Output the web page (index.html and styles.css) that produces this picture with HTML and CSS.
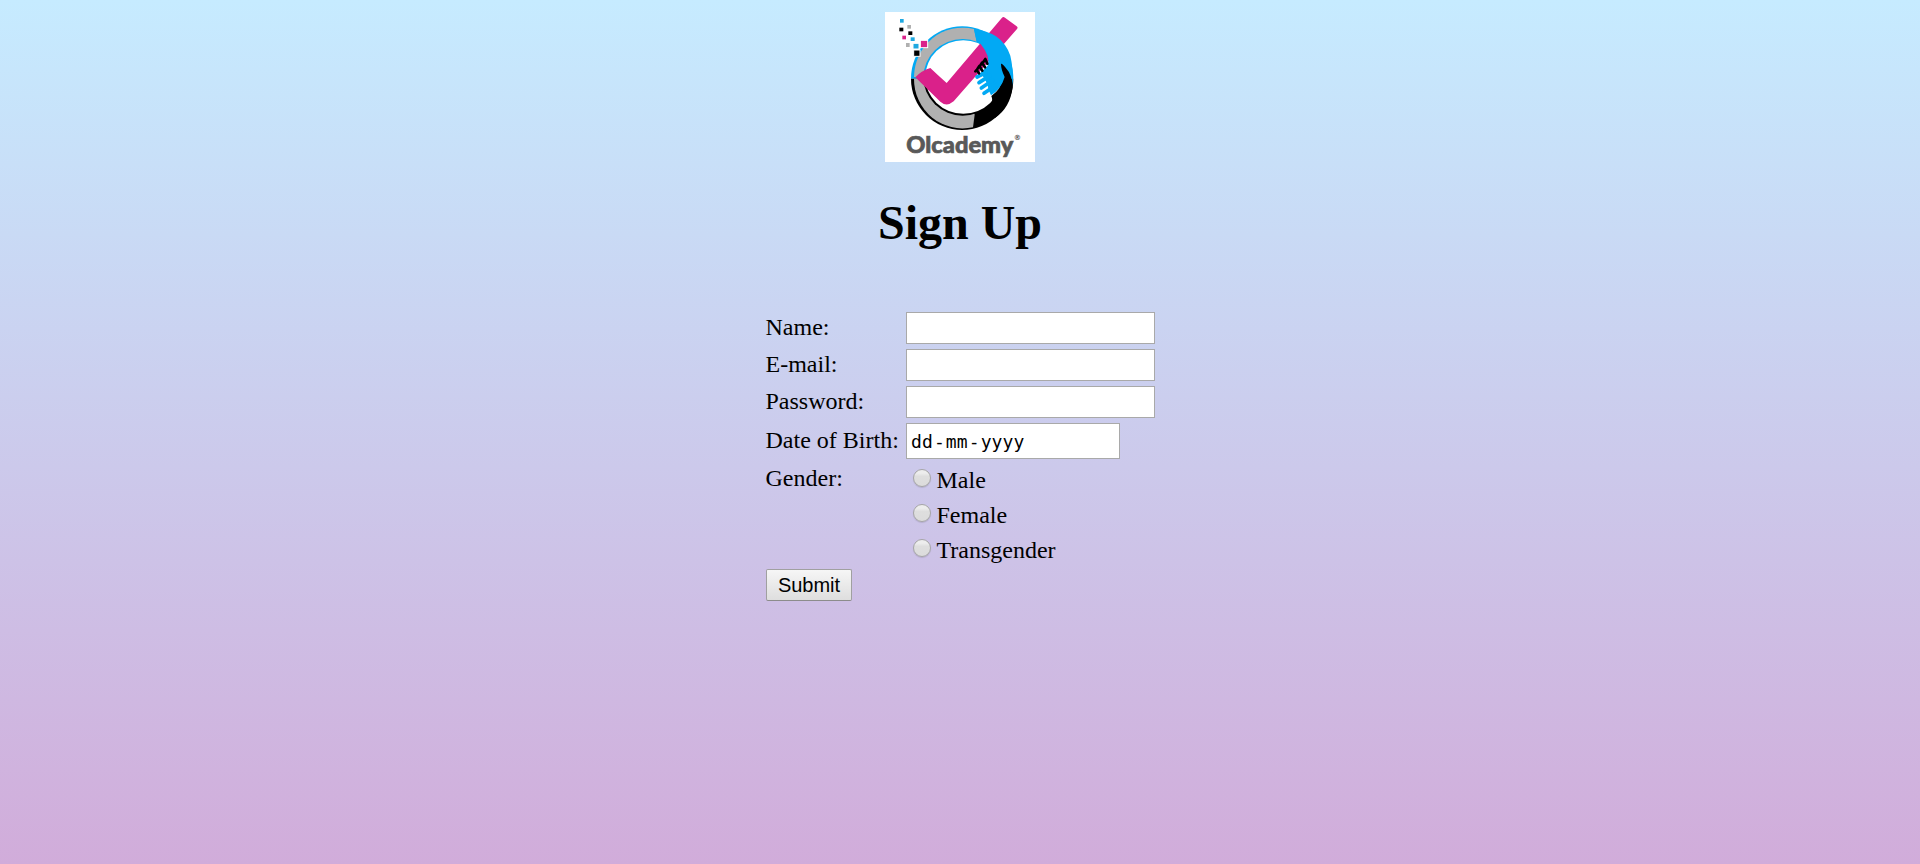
FILE: index.html
```html
<!DOCTYPE html>
<html lang="en">
<head>
<meta charset="utf-8">
<title>Sign Up</title>
<link rel="stylesheet" href="styles.css">
</head>
<body>
<main class="page">
  <svg class="logo" viewBox="15 12 450 450" role="img" aria-label="Olcademy">
    <rect x="15" y="12" width="450" height="450" fill="#fff"/>
    <!-- ring: blue upper half, black lower half -->
    <path d="M93 212A153.500 157 0 0 1 400 212Z" fill="#02a9f4"/>
    <path d="M93 212A153.500 154 0 0 0 400 212Z" fill="#000"/>
    <path d="M102 207A146 149 0 0 1 282 63L290 101L248 207Z" fill="#b0b0b0"/>
    <path d="M102 212A146 148 0 0 0 279 358L284 320L248 212Z" fill="#b0b0b0"/>
    <path d="M130 209A118 116 0 0 1 366 209Z" fill="#02a9f4"/>
    <path d="M130 207A118 116 0 0 0 366 207Z" fill="#000"/>
    <ellipse cx="250" cy="207" rx="114" ry="110" fill="#fff"/>
    <!-- check mark -->
    <path d="M106 208Q124 188 151 180Q174 202 200 225L366 29Q370 25 375 29L410 55Q415 59 411 63L221 280Q200 298 181 281Z" fill="#da218a"/>
    <!-- arm and hand crossing the check -->
    <path d="M282 64Q318 67 348 85Q378 106 391 143Q400 180 399 235Q398 200 365 166L378 207Q362 244 333 262L326 246L322 228L312 210L302 194L323 173Q332 145 302 108L290 101Z" fill="#02a9f4"/>
    <path d="M291 207L318 193M297 224L330 203M304 240L338 217M312 256L350 230" fill="none" stroke="#02a9f4" stroke-width="11" stroke-linecap="round"/>
    <path d="M363 167Q367 166 377 179Q397 200 398 238Q390 300 345 330L310 313Q345 290 334 264Q363 244 374 207Q363 184 363 167Z" fill="#000"/>
    <path d="M286 190L290 186L297 196M292 183L298 174L307 188M300 173L306 164L315 178M310 162L316 153L322 167" fill="none" stroke="#000" stroke-width="8" stroke-linecap="round" stroke-linejoin="round"/>
    <!-- scattered squares -->
    <g>
      <rect x="60" y="33" width="11" height="11" fill="#1fa9e1"/>
      <rect x="82" y="51" width="11" height="11" fill="#b0b0b0"/>
      <rect x="58" y="59" width="12" height="11" fill="#000"/>
      <rect x="85" y="70" width="12" height="11" fill="#000"/>
      <rect x="67" y="83" width="11" height="11" fill="#da218a"/>
      <rect x="92" y="88" width="12" height="11" fill="#1fa9e1"/>
      <rect x="78" y="105" width="11" height="12" fill="#b0b0b0"/>
      <rect x="99" y="106" width="18" height="17" fill="#1fa9e1" stroke="#fff" stroke-width="3"/>
      <rect x="121" y="97" width="22" height="22" fill="#da218a" stroke="#fff" stroke-width="3"/>
      <rect x="101" y="126" width="19" height="19" fill="#000" stroke="#fff" stroke-width="3"/>
    </g>
    <text class="brand" x="79" y="434" textLength="321" lengthAdjust="spacingAndGlyphs">Olcademy</text>
    <text class="mark" x="401" y="396">®</text>
  </svg>

  <h1 class="title">Sign Up</h1>

  <form class="form">
    <label class="label" for="name">Name:</label>
    <input class="field" id="name" type="text">
    <label class="label" for="email">E-mail:</label>
    <input class="field" id="email" type="email">
    <label class="label" for="password">Password:</label>
    <input class="field" id="password" type="password">
    <label class="label label-date">Date of Birth:</label>
    <div class="date" tabindex="0"><span>dd</span><span>-</span><span>mm</span><span>-</span><span>yyyy</span></div>
    <span class="label label-gender">Gender:</span>
    <div class="options">
      <label class="option"><input class="radio" type="radio" name="gender">Male</label>
      <label class="option"><input class="radio" type="radio" name="gender">Female</label>
      <label class="option"><input class="radio" type="radio" name="gender">Transgender</label>
    </div>
    <button class="submit" type="button">Submit</button>
  </form>
</main>
</body>
</html>
```
FILE: styles.css
```css
* {
  box-sizing: border-box;
}

body {
  margin: 0;
  font: 24px/27px "Liberation Serif", "Times New Roman", serif;
  color: #000;
}

.page {
  display: flex;
  flex-direction: column;
  align-items: center;
  min-height: 864px;
  padding-top: 12px;
  background: linear-gradient(#c6ebff, #d1acda);
}

.logo {
  display: block;
  width: 150px;
  height: 150px;
}

.brand {
  font: 900 66px Lato, sans-serif;
  fill: #595959;
  stroke: #595959;
  stroke-width: 2px;
}

.mark {
  font: 700 22px "DejaVu Sans", sans-serif;
  fill: #595959;
}

.title {
  margin: 33px 0 0;
  font-size: 48px;
  line-height: 55px;
}

.form {
  display: grid;
  grid-template-columns: 141px 249px;
  row-gap: 5px;
  margin-top: 62px;
  align-items: start;
}

.label {
  padding: 2px 0 0 0.5px;
}

.label-date {
  padding-top: 4px;
}

.label-gender {
  padding-top: 1px;
}

.field {
  width: 249px;
  height: 32px;
  margin: 0;
  padding: 2px 4px;
  border: 1px solid #a9a9a9;
  background: #fff;
  font: 20px "Liberation Sans", Arial, sans-serif;
}

.date {
  display: flex;
  gap: 1px;
  width: 214px;
  height: 36px;
  padding: 4px 4px 0;
  border: 1px solid #a9a9a9;
  background: #fff;
  font: 18px/27px "DejaVu Sans Mono", monospace;
  letter-spacing: 0.1px;
}

.options {
  display: flex;
  flex-direction: column;
  gap: 8px;
  padding: 3px 0 0 7px;
}

.option {
  display: flex;
  align-items: flex-start;
  gap: 5.5px;
}

.radio {
  appearance: none;
  width: 18px;
  height: 18px;
  margin: 2px 0 0;
  border: 1px solid #a6a6a6;
  border-radius: 50%;
  background: linear-gradient(#ededed 20%, #dedede 40%, #dcdcdc);
  box-shadow: 0 1px 1px rgba(0, 0, 0, 0.12);
}

.submit {
  grid-column: 1 / -1;
  justify-self: start;
  width: 86px;
  height: 32px;
  margin: 0 0 0 1px;
  padding: 0;
  border: 1px solid #a0a0a0;
  border-bottom-color: #8c8c8c;
  border-radius: 2px;
  background: linear-gradient(#f6f6f6, #dedede);
  font: 20px/28px "Liberation Sans", Arial, sans-serif;
  color: #000;
}
```
